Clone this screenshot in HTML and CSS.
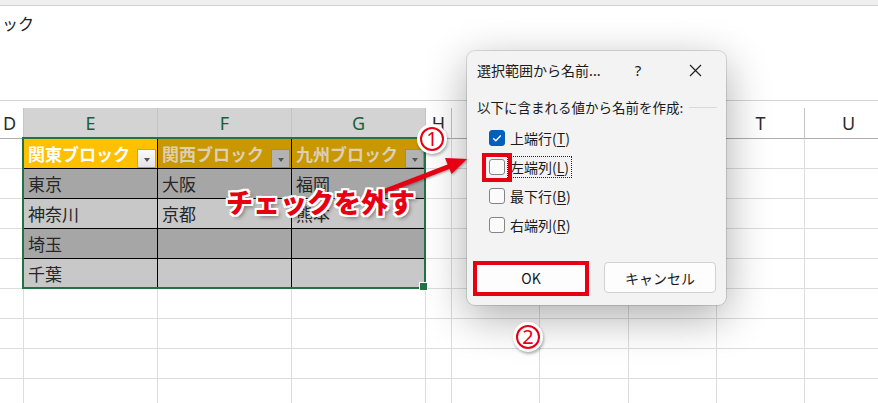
FILE: index.html
```html
<!DOCTYPE html>
<html lang="ja">
<head>
    <meta charset="UTF-8">
    <meta name="viewport" content="width=device-width, initial-scale=1.0">
    <title>選択範囲から名前を作成</title>
    <link rel="stylesheet" href="styles.css">
</head>
<body>
<div class="app">
    <div class="top-strip"></div>
    <div class="formula-bar">ック</div>

    <div class="sheet">
        <!-- column headers -->
        <div class="ch ch-d">D</div>
        <div class="ch sel">E</div>
        <div class="ch sel">F</div>
        <div class="ch sel">G</div>
        <div class="ch">H</div>
        <div class="ch">Q</div>
        <div class="ch">R</div>
        <div class="ch">S</div>
        <div class="ch">T</div>
        <div class="ch">U</div>

        <!-- row: table header -->
        <div class="c"></div>
        <div class="c t th active">関東ブロック<span class="drop"></span></div>
        <div class="c t th">関西ブロック<span class="drop"></span></div>
        <div class="c t th">九州ブロック<span class="drop"></span></div>
        <div class="c"></div><div class="c"></div><div class="c"></div><div class="c"></div><div class="c"></div><div class="c"></div>

        <div class="c"></div>
        <div class="c t dark">東京</div>
        <div class="c t dark">大阪</div>
        <div class="c t dark">福岡</div>
        <div class="c"></div><div class="c"></div><div class="c"></div><div class="c"></div><div class="c"></div><div class="c"></div>

        <div class="c"></div>
        <div class="c t light">神奈川</div>
        <div class="c t light">京都</div>
        <div class="c t light">熊本</div>
        <div class="c"></div><div class="c"></div><div class="c"></div><div class="c"></div><div class="c"></div><div class="c"></div>

        <div class="c"></div>
        <div class="c t dark">埼玉</div>
        <div class="c t dark"></div>
        <div class="c t dark"></div>
        <div class="c"></div><div class="c"></div><div class="c"></div><div class="c"></div><div class="c"></div><div class="c"></div>

        <div class="c"></div>
        <div class="c t light">千葉</div>
        <div class="c t light"></div>
        <div class="c t light"></div>
        <div class="c"></div><div class="c"></div><div class="c"></div><div class="c"></div><div class="c"></div><div class="c"></div>

        <div class="c"></div><div class="c"></div><div class="c"></div><div class="c"></div><div class="c"></div><div class="c"></div><div class="c"></div><div class="c"></div><div class="c"></div><div class="c"></div>
        <div class="c"></div><div class="c"></div><div class="c"></div><div class="c"></div><div class="c"></div><div class="c"></div><div class="c"></div><div class="c"></div><div class="c"></div><div class="c"></div>
        <div class="c"></div><div class="c"></div><div class="c"></div><div class="c"></div><div class="c"></div><div class="c"></div><div class="c"></div><div class="c"></div><div class="c"></div><div class="c"></div>
        <div class="c"></div><div class="c"></div><div class="c"></div><div class="c"></div><div class="c"></div><div class="c"></div><div class="c"></div><div class="c"></div><div class="c"></div><div class="c"></div>
    </div>

    <div class="selection"></div>

    <div class="dialog">
        <div class="dlg-title">
            <span class="caption">選択範囲から名前...</span>
            <span class="dlg-help">?</span>
            <span class="dlg-close">
                <svg width="13" height="13" viewBox="0 0 13 13"><path d="M1 1L12 12M12 1L1 12" stroke="#222" stroke-width="1.2" fill="none"/></svg>
            </span>
        </div>
        <div class="group-label">以下に含まれる値から名前を作成:</div>
        <div class="options">
            <div class="opt">
                <span class="box on"><svg width="12" height="12" viewBox="0 0 12 12"><path d="M2.2 6.3L4.8 8.8L9.8 3.6" stroke="#fff" stroke-width="1.4" fill="none"/></svg></span>
                <span class="lbl">上端行(<u>T</u>)</span>
            </div>
            <div class="opt">
                <span class="box"></span>
                <span class="lbl focus">左端列(<u>L</u>)</span>
            </div>
            <div class="opt">
                <span class="box"></span>
                <span class="lbl">最下行(<u>B</u>)</span>
            </div>
            <div class="opt">
                <span class="box"></span>
                <span class="lbl">右端列(<u>R</u>)</span>
            </div>
        </div>
        <div class="buttons">
            <button type="button" class="btn">OK</button>
            <button type="button" class="btn">キャンセル</button>
        </div>
        <div class="mark mark-check"></div>
        <div class="mark mark-ok"></div>
    </div>

    <svg class="arrow" width="100" height="50" viewBox="0 0 100 50">
        <line x1="5" y1="45" x2="79" y2="16.5" stroke="#e60012" stroke-width="5"/>
        <polygon points="97,9 81.5,24 75,8" fill="#e60012"/>
    </svg>
    <div class="callout">チェックを外す</div>

    <div class="num num-1"><span>1</span></div>
    <div class="num num-2"><span>2</span></div>
</div>
</body>
</html>
```

FILE: styles.css
```css
* {
    box-sizing: border-box;
}
body {
    margin: 0;
    font-family: "Noto Sans CJK JP", "Noto Sans", sans-serif;
    background: #fff;
    overflow: hidden;
}
.app {
    position: relative;
    width: 878px;
    height: 403px;
    overflow: hidden;
}
.top-strip {
    height: 6px;
    background: #efefef;
    border-bottom: 1px solid #d2d2d2;
}
.formula-bar {
    height: 95px;
    padding: 7px 0 0 2px;
    border-bottom: 1px solid #d4d4d4;
    font-size: 16px;
    line-height: 20px;
    color: #222;
}

/* grid */
.sheet {
    display: grid;
    grid-template-columns: 24px 134px 134px 134px 26px 88px 89px 88px 88px 88px;
    grid-template-rows: 31px;
    grid-auto-rows: 30px;
    margin-top: 7px;
}
.ch {
    display: flex;
    align-items: center;
    justify-content: center;
    border-right: 1px solid #c4c4c4;
    border-bottom: 1px solid #adadad;
    font-family: "Noto Sans", sans-serif;
    font-size: 18px;
    color: #2b2b2b;
}
.ch-d {
    padding-right: 4px;
}
.ch.sel {
    background: #d3d3d3;
    color: #1d5c3a;
}
.c {
    display: flex;
    align-items: center;
    padding-left: 4px;
    border-right: 1px solid #dcdcdc;
    border-bottom: 1px solid #dcdcdc;
    font-size: 17px;
    color: #262626;
    white-space: nowrap;
    overflow: hidden;
}
.t {
    border-right-color: #000;
    border-bottom-color: #000;
}
.t.dark {
    background: #a6a6a6;
}
.t.light {
    background: #c8c8c8;
}
.th {
    justify-content: space-between;
    padding-right: 1px;
    background: #c99700;
    color: #dccfb5;
    font-weight: bold;
}
.th.active {
    background: #ffc000;
    color: #fff;
}
.drop {
    display: flex;
    align-items: center;
    justify-content: center;
    align-self: flex-end;
    width: 19px;
    height: 19px;
    border: 1px solid #8c8c8c;
    background: #b3b3b3;
}
.drop::after {
    content: "";
    margin-top: 3px;
    border-left: 3.5px solid transparent;
    border-right: 3.5px solid transparent;
    border-top: 4px solid #555;
}
.active .drop {
    background: linear-gradient(#fbfbfb, #e4e4e4);
    border-color: #a3a3a3;
}
.selection {
    position: absolute;
    left: 22px;
    top: 137px;
    width: 404px;
    height: 152px;
    border: 2px solid #217346;
}
.selection::after {
    content: "";
    position: absolute;
    right: -4px;
    bottom: -4px;
    width: 7px;
    height: 7px;
    background: #217346;
    border: 1px solid #fff;
}

/* dialog */
.dialog {
    position: absolute;
    left: 467px;
    top: 51px;
    width: 259px;
    height: 254px;
    background: #f3f3f3;
    border-radius: 8px;
    box-shadow: 0 0 0 1px rgba(0, 0, 0, 0.12), 0 12px 44px rgba(0, 0, 0, 0.33);
    color: #1a1a1a;
}
.dlg-title {
    display: flex;
    align-items: center;
    height: 38px;
    padding-left: 10px;
    font-size: 14px;
}
.caption {
    flex: 1;
}
.dlg-help {
    width: 46px;
    margin-right: 11px;
    text-align: center;
    font-family: "Noto Sans", sans-serif;
    font-size: 15px;
}
.dlg-close {
    display: flex;
    justify-content: center;
    width: 46px;
    margin-right: 8px;
}
.group-label {
    display: flex;
    align-items: center;
    height: 20px;
    margin-top: 8px;
    padding: 0 9px 0 10px;
    font-size: 13.5px;
}
.group-label::after {
    content: "";
    flex: 1;
    height: 1px;
    margin-left: 6px;
    background: #d9d9d9;
}
.options {
    margin-top: 6px;
    padding-left: 22px;
}
.opt {
    display: flex;
    align-items: center;
    height: 29px;
    font-size: 14px;
}
.box {
    flex: none;
    width: 16px;
    height: 16px;
    margin-right: 3px;
    border: 1px solid #858585;
    border-radius: 3px;
    background: #fbfbfb;
}
.box.on {
    display: flex;
    align-items: center;
    justify-content: center;
    background: #005fb8;
    border-color: #005fb8;
}
.lbl {
    padding: 0 2px;
    line-height: 20px;
}
.lbl u {
    text-underline-offset: 2px;
}
.focus {
    outline: 1px dotted #222;
}
.buttons {
    display: flex;
    gap: 17px;
    margin-top: 23px;
    padding-left: 8px;
}
.btn {
    display: flex;
    align-items: center;
    justify-content: center;
    width: 112px;
    height: 31px;
    padding: 0;
    border: 1px solid #d1d1d1;
    border-radius: 4px;
    background: #fdfdfd;
    font-family: "Noto Sans CJK JP", "Noto Sans", sans-serif;
    font-size: 14px;
    color: #1a1a1a;
}
.mark {
    position: absolute;
    border: 4px solid #e60012;
}
.mark-check {
    left: 15px;
    top: 102px;
    width: 30px;
    height: 29px;
}
.mark-ok {
    left: 6px;
    top: 210px;
    width: 116px;
    height: 35px;
}

/* annotations */
.arrow {
    position: absolute;
    left: 370px;
    top: 150px;
    filter: drop-shadow(1px 1px 1px rgba(0, 0, 0, 0.35));
}
.callout {
    position: absolute;
    left: 226px;
    top: 187px;
    font-size: 27px;
    line-height: 30px;
    font-weight: 900;
    color: #e60012;
    white-space: nowrap;
    text-shadow:
        2px 0 0 #fff, -2px 0 0 #fff, 0 2px 0 #fff, 0 -2px 0 #fff,
        2px 2px 0 #fff, -2px -2px 0 #fff, 2px -2px 0 #fff, -2px 2px 0 #fff,
        3px 3px 4px rgba(0, 0, 0, 0.45);
}
.num {
    position: absolute;
    display: flex;
    align-items: center;
    justify-content: center;
    width: 30px;
    height: 30px;
    border-radius: 50%;
    background: #fff;
    box-shadow: 1px 2px 3px rgba(0, 0, 0, 0.3);
}
.num span {
    display: flex;
    align-items: center;
    justify-content: center;
    width: 24px;
    height: 24px;
    border: 2px solid #e60012;
    border-radius: 50%;
    color: #e60012;
    font-family: "Noto Sans", sans-serif;
    font-size: 20px;
    line-height: 1;
}
.num-1 {
    left: 417px;
    top: 124px;
}
.num-2 {
    left: 513px;
    top: 322px;
}
```
